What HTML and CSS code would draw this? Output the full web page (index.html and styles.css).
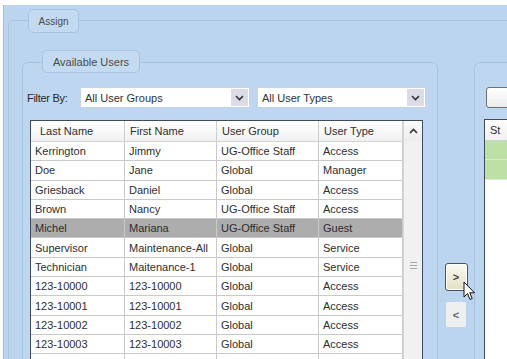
FILE: index.html
```html
<!DOCTYPE html>
<html lang="en">
<head>
  <meta charset="UTF-8">
  <title>Assign Users</title>
  <link rel="stylesheet" href="styles.css">
</head>
<body>

<div class="window">
  <div class="outer">
    <div class="tab tab-assign">Assign</div>

    <div class="panes">
      <div class="users">
        <div class="tab tab-users">Available Users</div>

        <div class="filter">
          <span class="filter-label">Filter By:</span>
          <div class="combo combo-groups">
            <span>All User Groups</span>
            <span class="drop"><svg width="9" height="6" viewBox="0 0 9 6"><path d="M1 1 L4.5 4.5 L8 1" fill="none" stroke="#333" stroke-width="1.6"/></svg></span>
          </div>
          <div class="combo combo-types">
            <span>All User Types</span>
            <span class="drop"><svg width="9" height="6" viewBox="0 0 9 6"><path d="M1 1 L4.5 4.5 L8 1" fill="none" stroke="#333" stroke-width="1.6"/></svg></span>
          </div>
        </div>

        <div class="grid">
          <div class="grid-body">
            <div class="row head">
              <div class="cell first">Last Name</div>
              <div class="cell">First Name</div>
              <div class="cell">User Group</div>
              <div class="cell">User Type</div>
            </div>
            <div class="row"><div class="cell">Kerrington</div><div class="cell">Jimmy</div><div class="cell">UG-Office Staff</div><div class="cell">Access</div></div>
            <div class="row"><div class="cell">Doe</div><div class="cell">Jane</div><div class="cell">Global</div><div class="cell">Manager</div></div>
            <div class="row"><div class="cell">Griesback</div><div class="cell">Daniel</div><div class="cell">Global</div><div class="cell">Access</div></div>
            <div class="row"><div class="cell">Brown</div><div class="cell">Nancy</div><div class="cell">UG-Office Staff</div><div class="cell">Access</div></div>
            <div class="row selected"><div class="cell">Michel</div><div class="cell">Mariana</div><div class="cell">UG-Office Staff</div><div class="cell">Guest</div></div>
            <div class="row"><div class="cell">Supervisor</div><div class="cell">Maintenance-All</div><div class="cell">Global</div><div class="cell">Service</div></div>
            <div class="row"><div class="cell">Technician</div><div class="cell">Maitenance-1</div><div class="cell">Global</div><div class="cell">Service</div></div>
            <div class="row"><div class="cell">123-10000</div><div class="cell">123-10000</div><div class="cell">Global</div><div class="cell">Access</div></div>
            <div class="row"><div class="cell">123-10001</div><div class="cell">123-10001</div><div class="cell">Global</div><div class="cell">Access</div></div>
            <div class="row"><div class="cell">123-10002</div><div class="cell">123-10002</div><div class="cell">Global</div><div class="cell">Access</div></div>
            <div class="row"><div class="cell">123-10003</div><div class="cell">123-10003</div><div class="cell">Global</div><div class="cell">Access</div></div>
            <div class="row"><div class="cell"></div><div class="cell"></div><div class="cell"></div><div class="cell"></div></div>
          </div>
          <div class="scrollbar">
            <div class="scroll-up"><svg width="9" height="6" viewBox="0 0 9 6"><path d="M1 5 L4.5 1.5 L8 5" fill="none" stroke="#333" stroke-width="1.6"/></svg></div>
            <div class="thumb"><span class="grip"></span></div>
          </div>
        </div>
      </div>

      <div class="mover">
        <button class="move move-right">&gt;</button>
        <button class="move move-left">&lt;</button>
        <svg class="cursor" width="13" height="20" viewBox="0 0 13 20">
          <path d="M1 1 L1 16 L4.5 12.5 L7 18.5 L9.2 17.5 L6.8 11.8 L11.5 11.8 Z" fill="#fff" stroke="#111" stroke-width="1"/>
        </svg>
      </div>

      <div class="assigned">
        <button class="assigned-btn"></button>
        <div class="assigned-grid">
          <div class="row head"><div class="cell">St</div></div>
          <div class="row green"><div class="cell"></div></div>
          <div class="row green"><div class="cell"></div></div>
        </div>
      </div>
    </div>
  </div>
</div>

</body>
</html>
```

FILE: styles.css
```css
body {
  margin: 0;
  padding: 0;
  background: #fff;
  height: 359px;
  overflow: hidden;
  font-family: 'Liberation Sans', Arial, sans-serif;
  font-size: 11px;
  color: #2e2e2e;
}
.window {
  margin: 5px 0 0 3px;
  height: 354px;
  background: #bcd5ef;
  border-left: 1px solid #a3bcd8;
  padding: 15px 0 0 4px;
  box-sizing: border-box;
  overflow: hidden;
}
.outer {
  width: 520px;
  height: 400px;
  border: 1px solid #a8c3e0;
  border-radius: 5px;
}
.tab {
  box-sizing: border-box;
  border: 1px solid #a9c4e2;
  border-radius: 5px;
  background: #c4daf1;
  color: #4a4a4a;
  font-size: 10px;
  display: flex;
  align-items: center;
  justify-content: center;
}
.tab-assign {
  width: 51px;
  height: 24px;
  margin: -12px 0 0 19px;
}
.panes {
  display: flex;
  margin: 29px 0 0 13px;
}
.users {
  flex: 0 0 416px;
  height: 320px;
  box-sizing: border-box;
  border: 1px solid #a8c3e0;
  border-radius: 6px;
  background: #bed6f0;
}
.tab-users {
  width: 98px;
  height: 23px;
  margin: -13px 0 0 19px;
  font-size: 11px;
}
.filter {
  display: flex;
  align-items: center;
  margin: 14px 0 0 4px;
  height: 21px;
}
.filter-label {
  width: 53px;
  font-size: 11px;
  letter-spacing: -0.3px;
  color: #2a2a2a;
}
.combo {
  height: 21px;
  box-sizing: border-box;
  background: #fff;
  border: 1px solid #c5d3e2;
  display: flex;
  align-items: center;
  justify-content: space-between;
  padding-left: 4px;
  color: #333;
}
.combo-groups {
  width: 170px;
  margin-right: 7px;
}
.combo-types {
  width: 169px;
}
.drop {
  width: 17px;
  height: 17px;
  margin-right: 1px;
  background: #dcdce8;
  display: flex;
  align-items: center;
  justify-content: center;
}
.grid {
  display: flex;
  width: 393px;
  height: 240px;
  margin: 12px 0 0 7px;
  box-sizing: border-box;
  border: 1px solid #3f4b59;
  border-bottom: none;
  background: #fff;
}
.grid-body {
  width: 372px;
}
.row {
  display: grid;
  grid-template-columns: 94px 92px 102px 84px;
  height: 19.3px;
  box-sizing: border-box;
  border-bottom: 1px solid #c9c9c9;
}
.row.head {
  height: 21px;
  background: linear-gradient(#ffffff, #f1f1f1);
  border-bottom: 1px solid #d4d4d4;
}
.cell {
  display: flex;
  align-items: center;
  padding-left: 4px;
  border-right: 1px solid #c9c9c9;
  white-space: nowrap;
  overflow: hidden;
}
.row.head .cell {
  padding-left: 5px;
  border-right-color: #d0d0d0;
}
.row.head .cell.first {
  padding-left: 9px;
}
.row.selected {
  background: #adadad;
}
.scrollbar {
  width: 19px;
  background: #ececec;
  border-left: 1px solid #d6d6d6;
  display: flex;
  flex-direction: column;
}
.scroll-up {
  height: 20px;
  display: flex;
  align-items: center;
  justify-content: center;
  background: linear-gradient(#fbfbfb, #ececec);
}
.thumb {
  flex: 1;
  background: #f1f1f1;
  display: flex;
  justify-content: center;
  padding-top: 121px;
}
.grip {
  width: 7px;
  height: 5px;
  border-top: 1px solid #a8a8a8;
  border-bottom: 1px solid #a8a8a8;
  background: linear-gradient(transparent 2px, #a8a8a8 2px, #a8a8a8 3px, transparent 3px);
}
.mover {
  position: relative;
  flex: 0 0 36px;
  display: flex;
  flex-direction: column;
  align-items: center;
  padding-top: 201px;
}
.move {
  font-family: 'Liberation Sans', Arial, sans-serif;
  font-weight: bold;
  font-size: 11px;
  color: #444;
  padding: 0;
  cursor: pointer;
}
.move-right {
  width: 23px;
  height: 28px;
  border: 1px solid #4a5260;
  border-radius: 3px;
  background: linear-gradient(#fbfbf4, #e4e0c4);
  box-shadow: inset 0 0 0 1px #fff;
}
.move-left {
  width: 20px;
  height: 25px;
  margin-top: 11px;
  border: none;
  border-radius: 2px;
  background: #eef0ef;
  color: #666;
}
.cursor {
  position: absolute;
  left: 25px;
  top: 219px;
}
.assigned {
  flex: 1;
  min-width: 0;
  height: 320px;
  border-left: 1px solid #a8c3e0;
  border-top: 1px solid #a8c3e0;
  border-radius: 6px 0 0 0;
  background: #bed6f0;
}
.assigned-btn {
  display: block;
  width: 40px;
  height: 21px;
  margin: 24px 0 0 11px;
  border: 1px solid #707070;
  border-radius: 3px;
  background: linear-gradient(#ffffff, #ececec);
}
.assigned-grid {
  margin: 11px 0 0 9px;
  height: 240px;
  border-left: 1px solid #3f4b59;
  border-top: 1px solid #3f4b59;
  background: #fff;
}
.assigned-grid .row {
  grid-template-columns: 60px;
}
.row.green {
  background: #bde0a6;
  border-bottom-color: #d8ecc8;
}
```
